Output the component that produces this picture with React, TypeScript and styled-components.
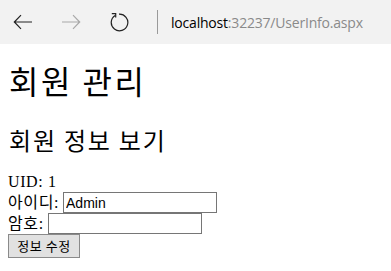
import React from "react";
import styled, { createGlobalStyle } from "styled-components";

const Global = createGlobalStyle`
  html, body { margin: 0; padding: 0; background: #fff; }
  body { font-family: "Liberation Serif", "Noto Sans CJK KR", serif; font-size: 16px; color: #000; }
`;

const Chrome = styled.div`
  height: 44px;
  background: #f2f2f2;
  display: flex;
  align-items: center;
  padding-left: 13px;
  box-sizing: border-box;
`;

const NavButton = styled.span<{ $gap: number }>`
  display: flex;
  align-items: center;
  margin-right: ${(p) => p.$gap}px;
`;

const Separator = styled.div`
  width: 1px;
  height: 24px;
  background: #9a9a9a;
  margin-right: 13px;
`;

const Url = styled.div`
  font-family: "Open Sans", "Noto Sans", sans-serif;
  font-size: 14px;
  color: #000;
  letter-spacing: -0.2px;
`;

const UrlRest = styled.span`
  color: #8a8a8a;
`;

const Page = styled.div`
  margin: 0 8px;
  padding-top: 1px;
`;

const Title = styled.h1`
  font-family: "Noto Sans CJK KR", sans-serif;
  font-weight: 400;
  font-size: 32px;
  line-height: 40px;
  letter-spacing: 2.5px;
  margin: 15px 0 0 1px;
`;

const Subtitle = styled.h2`
  font-family: "Noto Sans CJK KR", sans-serif;
  font-weight: 400;
  font-size: 24px;
  line-height: 32px;
  letter-spacing: 1.8px;
  margin: 24px 0 0 1px;
`;

const Form = styled.div`
  margin-top: 15px;
  display: flex;
  flex-direction: column;
  align-items: flex-start;
`;

const Line = styled.div`
  display: flex;
  align-items: center;
  height: 21px;
  line-height: 21px;
`;

const Label = styled.span`
  font-family: "Liberation Serif", "Noto Sans CJK KR", serif;
  font-size: 16px;
  letter-spacing: 0.6px;
  margin-right: 4px;
`;

const TextBox = styled.input`
  box-sizing: border-box;
  width: 154px;
  height: 21px;
  border: 1px solid #767676;
  outline: none;
  padding: 0 2px;
  font-family: "Liberation Sans", Arial, sans-serif;
  font-size: 14px;
  color: #000;
`;

const SubmitButton = styled.button`
  box-sizing: border-box;
  width: 72px;
  height: 24px;
  background: #e1e1e1;
  border: 1px solid #8a8a8a;
  font-family: "Noto Sans CJK KR", sans-serif;
  font-size: 13px;
  letter-spacing: 0.5px;
  color: #000;
  padding: 0;
  line-height: 20px;
`;

export default function App() {
  return (
    <>
      <Global />
      <Chrome>
        <NavButton $gap={28}>
          <svg width="20" height="16" viewBox="0 0 20 16" fill="none" stroke="#222" strokeWidth="1.2">
            <path d="M19 8H1.5M8 1.2L1.3 8l6.7 6.8" />
          </svg>
        </NavButton>
        <NavButton $gap={28}>
          <svg width="20" height="16" viewBox="0 0 20 16" fill="none" stroke="#a8a8a8" strokeWidth="1.2">
            <path d="M1 8h17.5M12 1.2L18.7 8 12 14.8" />
          </svg>
        </NavButton>
        <NavButton $gap={28}>
          <svg width="20" height="20" viewBox="0 0 20 20" fill="none" stroke="#222" strokeWidth="1.2">
            <path d="M6.2 3.4A8.3 8.3 0 1 0 10 2.2" />
            <path d="M2.8 1.6h3.9v3.9" />
          </svg>
        </NavButton>
        <Separator />
        <Url>
          localhost<UrlRest>:32237/UserInfo.aspx</UrlRest>
        </Url>
      </Chrome>
      <Page>
        <Title>회원 관리</Title>
        <Subtitle>회원 정보 보기</Subtitle>
        <Form>
          <Line>
            <Label>UID: 1</Label>
          </Line>
          <Line>
            <Label>아이디:</Label>
            <TextBox defaultValue="Admin" />
          </Line>
          <Line>
            <Label>암호:</Label>
            <TextBox type="password" />
          </Line>
          <SubmitButton>정보 수정</SubmitButton>
        </Form>
      </Page>
    </>
  );
}
